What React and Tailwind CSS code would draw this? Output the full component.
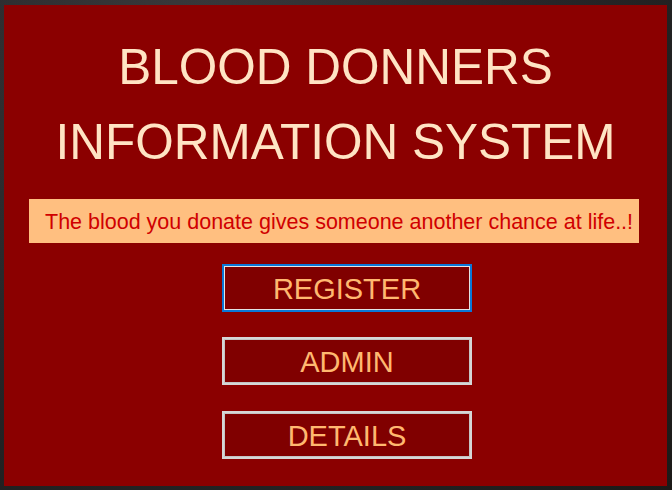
export default function App() {
  const buttons = [
    { label: 'REGISTER', focused: true, mt: 'mt-[21px]' },
    { label: 'ADMIN', focused: false, mt: 'mt-[25px]' },
    { label: 'DETAILS', focused: false, mt: 'mt-[26px]' },
  ];

  return (
    <div
      className="w-[672px] h-[490px] pt-[5px] pl-[4px] overflow-hidden bg-[#2b2b2d]"
      style={{
        backgroundImage:
          'radial-gradient(circle at 30% 10%, #3a3a3c 0%, #262628 55%, #1c1a18 100%)',
        fontFamily: '"Liberation Sans", Arial, sans-serif',
      }}
    >
      <div className="w-[663px] h-[481px] bg-[#8b0000] pt-[24px] flex flex-col">
        {/* title */}
        <h1 className="text-[49.5px] leading-[75px] text-[#ffe4c4] text-center font-normal">
          BLOOD DONNERS
          <br />
          INFORMATION SYSTEM
        </h1>

        {/* quote banner */}
        <div className="mt-[20px] ml-[25px] w-[610px] h-[44px] bg-[#ffbf80] flex items-center pl-[16px] pt-[2px] text-[21.5px] text-[#d00000] whitespace-nowrap">
          The blood you donate gives someone another chance at life..!
        </div>

        {buttons.map(b => (
          <button
            key={b.label}
            className={`${b.mt} ml-[218px] w-[250px] h-[48px] bg-[#800000] text-[#ffb870] text-[29px] leading-none pt-[3px] flex items-center justify-center border-2 ${
              b.focused
                ? 'border-[#0a78d8] shadow-[inset_0_0_0_1px_#e4e4e4]'
                : 'border-[#d6d6d6] shadow-[inset_0_0_0_1px_#c4c4c4]'
            }`}
          >
            {b.label}
          </button>
        ))}
      </div>
    </div>
  );
}
